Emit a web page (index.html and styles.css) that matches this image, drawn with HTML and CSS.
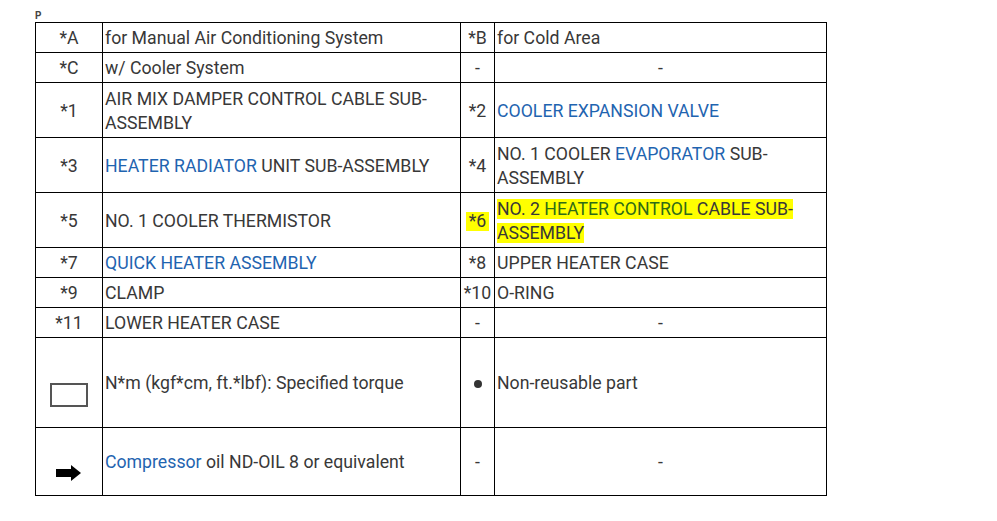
FILE: index.html
```html
<!DOCTYPE html>
<html>
<head>
<meta charset="utf-8">
<link rel="stylesheet" href="styles.css">
</head>
<body>
<div class="page">
  <div class="caption">P</div>
  <table class="legend">
    <colgroup>
      <col class="c1"><col class="c2"><col class="c3"><col class="c4">
    </colgroup>
    <tr class="r1">
      <td class="key">*A</td><td>for Manual Air Conditioning System</td>
      <td class="key">*B</td><td>for Cold Area</td>
    </tr>
    <tr class="r1">
      <td class="key">*C</td><td>w/ Cooler System</td>
      <td class="key">-</td><td class="dash">-</td>
    </tr>
    <tr class="r2">
      <td class="key">*1</td><td>AIR MIX DAMPER CONTROL CABLE SUB-ASSEMBLY</td>
      <td class="key">*2</td><td><span class="link">COOLER EXPANSION VALVE</span></td>
    </tr>
    <tr class="r2">
      <td class="key">*3</td><td><span class="link">HEATER RADIATOR</span> UNIT SUB-ASSEMBLY</td>
      <td class="key">*4</td><td>NO. 1 COOLER <span class="link">EVAPORATOR</span> SUB-ASSEMBLY</td>
    </tr>
    <tr class="r2">
      <td class="key">*5</td><td>NO. 1 COOLER THERMISTOR</td>
      <td class="key mark-cell"><span class="mark mark-key">*6</span></td><td><span class="mark">NO. 2 <span class="hl-link">HEATER CONTROL</span> CABLE SUB-ASSEMBLY</span></td>
    </tr>
    <tr class="r1">
      <td class="key">*7</td><td><span class="link">QUICK HEATER ASSEMBLY</span></td>
      <td class="key">*8</td><td>UPPER HEATER CASE</td>
    </tr>
    <tr class="r1">
      <td class="key">*9</td><td>CLAMP</td>
      <td class="key">*10</td><td>O-RING</td>
    </tr>
    <tr class="r1">
      <td class="key">*11</td><td>LOWER HEATER CASE</td>
      <td class="key">-</td><td class="dash">-</td>
    </tr>
    <tr class="r3">
      <td class="key icon-cell">
        <svg class="icon-torque" width="40" height="84" viewBox="0 0 40 84">
          <rect x="2" y="43" width="36" height="22" fill="#fff" stroke="#555" stroke-width="2"/>
        </svg>
      </td>
      <td>N*m (kgf*cm, ft.*lbf): Specified torque</td>
      <td class="key"><span class="dot"></span></td><td>Non-reusable part</td>
    </tr>
    <tr class="r4">
      <td class="key icon-cell">
        <svg class="icon-arrow" width="26" height="62" viewBox="0 0 26 62">
          <path d="M0 38 H15 V34 L25 42 L15 50 V46 H0 Z" fill="#000"/>
        </svg>
      </td>
      <td><span class="link">Compressor</span> oil ND-OIL 8 or equivalent</td>
      <td class="key">-</td><td class="dash">-</td>
    </tr>
  </table>
</div>
</body>
</html>
```

FILE: styles.css
```css
html, body {
  margin: 0;
  padding: 0;
  background: #fff;
}
.page {
  padding: 9px 0 0 35px;
  font-family: Roboto, "Liberation Sans", sans-serif;
  color: #383838;
}
.caption {
  font-size: 10px;
  line-height: 13px;
  font-weight: bold;
  color: #444;
}
.legend {
  border-collapse: collapse;
  table-layout: fixed;
  width: 792px;
  font-size: 17.7px;
  line-height: 24px;
}
.c1 { width: 67px; }
.c2 { width: 358px; }
.c3 { width: 34px; }
.c4 { width: 332px; }
.legend td {
  border: 1px solid #000;
  padding: 3px 2px 2px 2px;
  vertical-align: middle;
  text-align: left;
}
.legend td.key,
.legend td.dash {
  text-align: center;
  padding-left: 0;
  padding-right: 0;
  white-space: nowrap;
}
.r1 td { height: 24px; }
.r2 td { height: 49px; }
.r3 td { height: 84px; }
.r4 td { height: 62px; }
.icon-cell svg { display: block; margin: 0 auto; }
.link { color: #1f64b0; }
.hl-link { color: #2f6b17; }
.mark {
  background: #ffff00;
  -webkit-box-decoration-break: clone;
  box-decoration-break: clone;
}
.mark-key {
  display: inline-block;
  padding: 0 3px;
  line-height: 19px;
  margin-top: 4px;
}
.dot {
  display: inline-block;
  width: 8px;
  height: 8px;
  border-radius: 50%;
  background: #333;
  vertical-align: middle;
}
```
